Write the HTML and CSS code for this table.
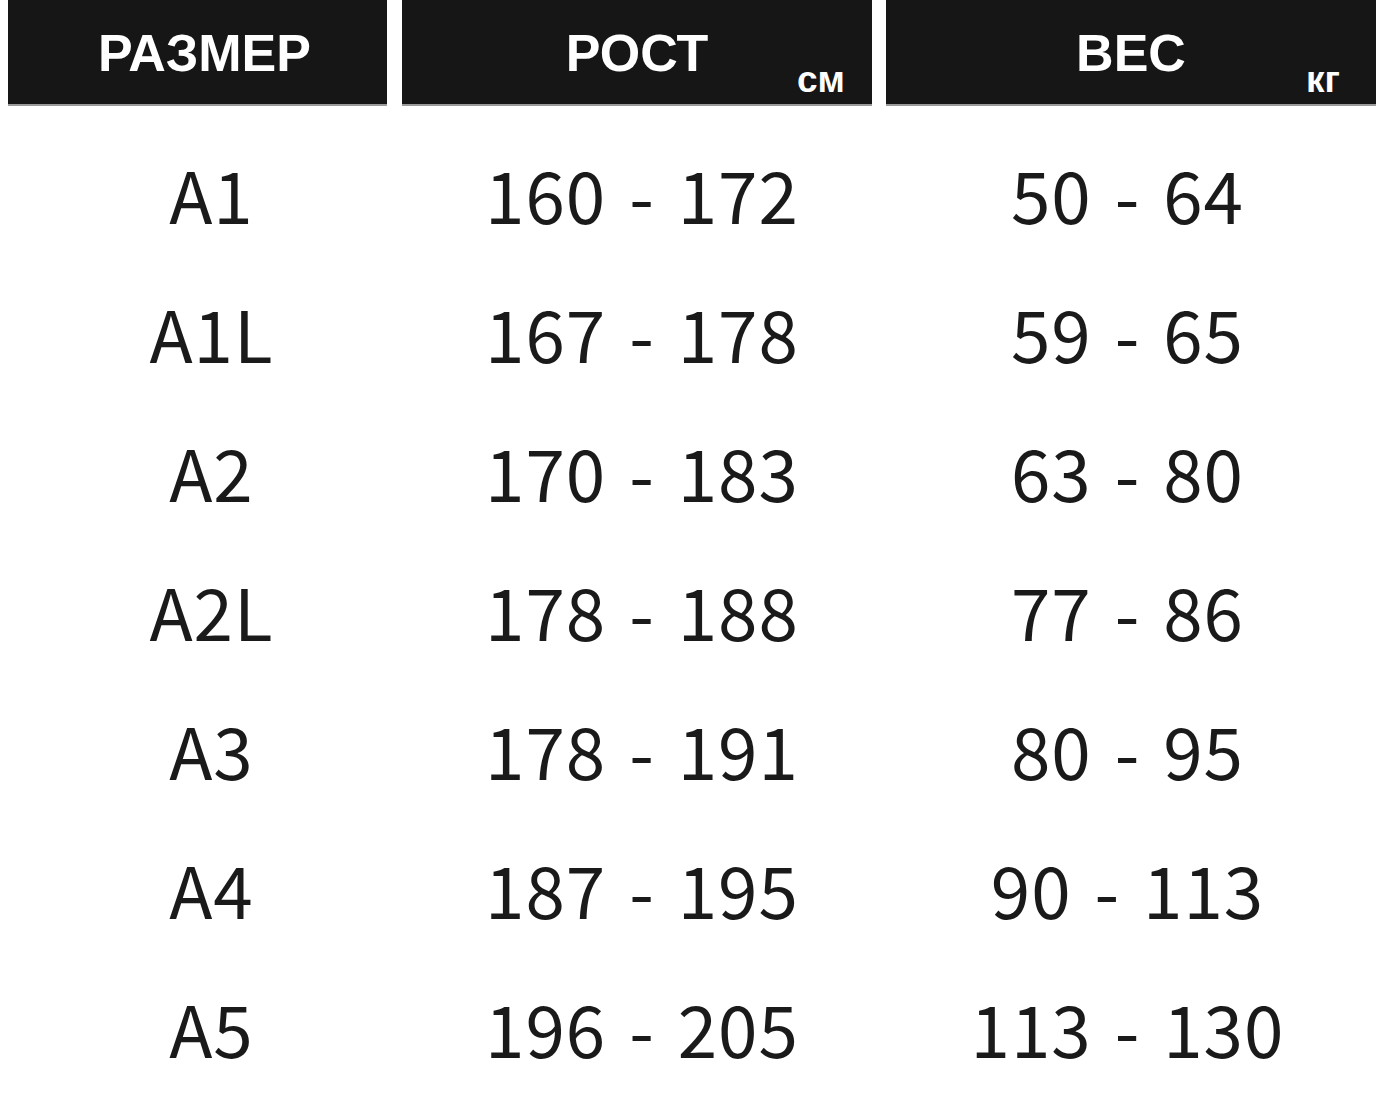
FILE: index.html
```html
<!DOCTYPE html>
<html lang="ru">
<head>
<meta charset="utf-8">
<link rel="stylesheet" href="styles.css">
</head>
<body>
<div class="chart">
  <div class="head h1"><span class="title">РАЗМЕР</span></div>
  <div class="head h2"><span class="title">РОСТ</span><span class="unit">см</span></div>
  <div class="head h3"><span class="title">ВЕС</span><span class="unit">кг</span></div>

  <div class="cell c1">A1</div><div class="cell c2">160 - 172</div><div class="cell c3">50 - 64</div>
  <div class="cell c1">A1L</div><div class="cell c2">167 - 178</div><div class="cell c3">59 - 65</div>
  <div class="cell c1">A2</div><div class="cell c2">170 - 183</div><div class="cell c3">63 - 80</div>
  <div class="cell c1">A2L</div><div class="cell c2">178 - 188</div><div class="cell c3">77 - 86</div>
  <div class="cell c1">A3</div><div class="cell c2">178 - 191</div><div class="cell c3">80 - 95</div>
  <div class="cell c1">A4</div><div class="cell c2">187 - 195</div><div class="cell c3">90 - 113</div>
  <div class="cell c1">A5</div><div class="cell c2">196 - 205</div><div class="cell c3">113 - 130</div>
</div>
</body>
</html>
```
FILE: styles.css
```css
html, body {
  margin: 0;
  padding: 0;
  background: #ffffff;
}
body {
  padding: 0 4px 0 8px;
}
.chart {
  display: grid;
  grid-template-columns: 379px 470px 489px;
  column-gap: 15px;
  grid-template-rows: 106px;
  grid-auto-rows: 139px;
}
.head {
  position: relative;
  background: #161616;
  border-bottom: 2px solid #9a9a9a;
  box-sizing: border-box;
  display: flex;
  align-items: center;
  justify-content: center;
  color: #ffffff;
  font-family: "Liberation Sans", Arial, sans-serif;
  font-weight: bold;
}
.h1 { padding-left: 14px; }
.h3 { margin-left: -1px; }
.title {
  font-size: 52px;
  line-height: 1;
  margin-top: 2px;
}
.unit {
  position: absolute;
  bottom: 6px;
  font-size: 37px;
  line-height: 1;
}
.h2 .unit { right: 27px; }
.h3 .unit { right: 36px; }
.cell {
  display: flex;
  align-items: center;
  justify-content: center;
  font-family: "Noto Sans CJK KR", "Noto Sans", sans-serif;
  font-size: 71px;
  color: #1a1a1a;
  line-height: 1;
  letter-spacing: 1px;
  word-spacing: 6px;
  padding-top: 36px;
}
.c1 { padding-left: 28px; }
.c2 { padding-left: 10px; }
.c3 { padding-right: 8px; }
```
